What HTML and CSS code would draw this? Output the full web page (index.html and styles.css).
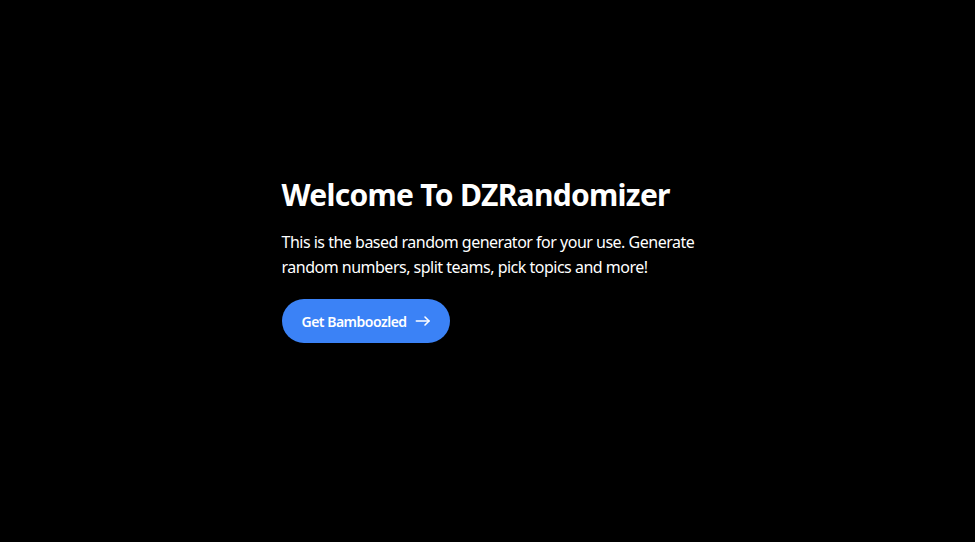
FILE: index.html
```html
<!DOCTYPE html>
<html lang="en">
<head>
  <meta charset="UTF-8" />
  <meta name="viewport" content="width=device-width, initial-scale=1.0" />
  <title>DZRandomizer</title>
  <link rel="stylesheet" href="styles.css">
</head>
<body>
  <main class="hero">
    <div class="hero-content">
      <h1>Welcome To DZRandomizer</h1>
      <p>This is the based random generator for your use. Generate random numbers, split teams, pick topics and more!</p>
      <a href="#" class="cta-btn">
        Get Bamboozled
        <svg width="16" height="16" viewBox="0 0 24 24" fill="none" stroke="currentColor" stroke-width="2.4" stroke-linecap="round" stroke-linejoin="round">
          <path d="M2 12h19" />
          <path d="M15 6l6 6-6 6" />
        </svg>
      </a>
    </div>
  </main>
</body>
</html>
```

FILE: styles.css
```css
body {
  margin: 0;
  padding: 0;
  background: #000;
  color: #fff;
  font-family: 'Segoe UI', 'Noto Sans', 'Open Sans', sans-serif;
}
.hero {
  min-height: 542px;
  display: flex;
  align-items: center;
  justify-content: center;
  box-sizing: border-box;
  padding: 0 0 22px 6px;
}
.hero-content {
  width: 418px;
}
h1 {
  font-size: 30px;
  line-height: 36px;
  font-weight: 700;
  letter-spacing: -0.7px;
  margin: 0 0 17px;
}
p {
  font-size: 16px;
  line-height: 25px;
  letter-spacing: -0.5px;
  margin: 0 0 19px;
}
.cta-btn {
  display: inline-flex;
  align-items: center;
  gap: 8px;
  height: 44px;
  padding: 0 19px 0 20px;
  box-sizing: border-box;
  background: #3b82f6;
  color: #fff;
  border-radius: 9999px;
  font-size: 14px;
  font-weight: 600;
  letter-spacing: -0.5px;
  text-decoration: none;
}
```
